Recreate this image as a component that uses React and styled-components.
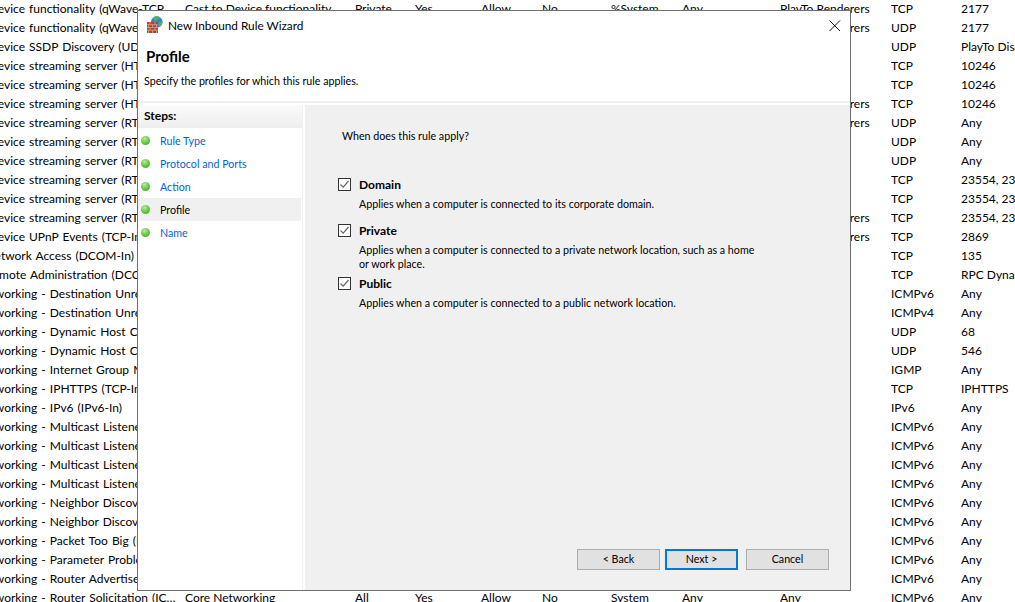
import React from "react";
import styled, { createGlobalStyle } from "styled-components";

const Global = createGlobalStyle`
  html, body { margin: 0; padding: 0; height: 100%; background: #fff; overflow: hidden; }
  #root { height: 602px; overflow: hidden; }
  * { box-sizing: border-box; }
`;

const Desktop = styled.div`
  position: relative;
  width: 1015px;
  height: 602px;
  overflow: hidden;
  background: #fff;
  font-family: "Lato", "Open Sans", sans-serif;
  font-size: 12px;
  color: #000;
`;
const RuleTable = styled.div`
  margin: -1px 0 0 -52px;
  width: 1067px;
`;
const RuleRow = styled.div`
  display: grid;
  grid-template-columns: 237px 170px 60px 66px 61px 69px 71px 98px 111px 70px 70px;
  height: 19px;
  line-height: 19px;
`;
const Cell = styled.div`
  white-space: nowrap;
  overflow: hidden;
  padding-right: ${(p) => (p.$first ? "8px" : "0")};
  text-overflow: ${(p) => (p.$first ? "ellipsis" : "clip")};
  word-spacing: ${(p) => (p.$first ? "1px" : "0")};
  margin-left: ${(p) => (p.$first ? "-2px" : "0")};
`;
const Wizard = styled.section`
  position: absolute;
  left: 137px;
  top: 10px;
  width: 714px;
  height: 581px;
  background: #fff;
  border: 1px solid #6f6f6f;
  display: flex;
  flex-direction: column;
  font-size: 10.7px;
`;
const TitleBar = styled.header`
  height: 30px;
  display: flex;
  align-items: center;
  padding: 0 8px 2px 9px;
  gap: 5px;
  flex: none;
`;
const TitleText = styled.span`
  flex: 1;
  color: #000;
  font-size: 11.8px;
`;
const CloseButton = styled.button`
  width: 14px;
  height: 14px;
  padding: 0;
  border: 0;
  background: none;
  display: flex;
  margin: 2px 0 0;
`;
const Heading = styled.div`
  flex: none;
  height: 62px;
  padding: 5px 0 0 6px;
  border-bottom: 2px solid #f0f0f0;
`;
const HeadingTitle = styled.h1`
  margin: 0 0 0 2px;
  font-size: 15px;
  line-height: 20px;
  font-weight: 700;
`;
const HeadingSub = styled.p`
  margin: 5px 0 0;
  line-height: 20px;
`;
const Body = styled.div`
  flex: 1;
  display: flex;
  min-height: 0;
  padding-top: 2px;
`;
const Steps = styled.nav`
  width: 165px;
  flex: none;
  border-right: 1px solid #f0f0f0;
  margin-right: 2px;
`;
const StepsHeader = styled.div`
  height: 23px;
  line-height: 22px;
  padding-left: 6px;
  font-weight: 700;
  font-size: 12px;
  background: linear-gradient(#fbfbfb, #eeeeee);
`;
const StepList = styled.ul`
  list-style: none;
  margin: 1px 0 0;
  padding: 0 1px 0 0;
`;
const Step = styled.li`
  height: 23px;
  display: flex;
  align-items: center;
  gap: 10px;
  padding-left: 3px;
  color: ${(p) => (p.$current ? "#000" : "#0066cc")};
  background: ${(p) => (p.$current ? "#f0f0f0" : "transparent")};
`;
const Bullet = styled.span`
  width: 9px;
  height: 9px;
  border-radius: 50%;
  flex: none;
  background: radial-gradient(circle at 40% 30%, #b8eba0, #57c236 60%, #45a62c);
`;
const Content = styled.main`
  flex: 1;
  background: #f0f0f0;
  display: flex;
  flex-direction: column;
  padding: 22px 21px 20px 33px;
`;
const Question = styled.p`
  margin: 0 0 0 4px;
  line-height: 18px;
`;
const Options = styled.div`
  margin-top: 31px;
  flex: 1;
  display: flex;
  flex-direction: column;
`;
const Option = styled.div`
  display: grid;
  grid-template-columns: 13px 1fr;
  column-gap: 8px;
  margin-bottom: ${(p) => p.$gap}px;
  align-items: start;
`;
const Box = styled.span`
  width: 13px;
  height: 13px;
  margin-top: 2px;
  background: #fff;
  border: 1px solid #333;
  display: flex;
`;
const OptionLabel = styled.div`
  font-weight: 700;
  font-size: 12px;
  line-height: 17px;
`;
const OptionDesc = styled.p`
  grid-column: 2;
  margin: 4px 0 0;
  width: 398px;
  line-height: 14px;
`;
const ButtonRow = styled.div`
  display: flex;
  justify-content: flex-end;
  gap: 8px;
`;
const Btn = styled.button`
  height: 21px;
  width: ${(p) => p.$w}px;
  margin-right: ${(p) => p.$mr || 0}px;
  font: inherit;
  line-height: 1;
  padding: 0;
  color: #000;
  background: #e1e1e1;
  border: ${(p) => (p.$primary ? "2px solid #0078d7" : "1px solid #adadad")};
`;

const Check = () => (
  <svg width="11" height="11" viewBox="0 0 11 11">
    <path d="M1.5 5.5 L4.2 8.2 L9.5 2" fill="none" stroke="#666" strokeWidth="1.2" />
  </svg>
);

const WallIcon = () => (
  <svg width="16" height="18" viewBox="0 0 16 18">
    <circle cx="9.8" cy="6" r="5.8" fill="#2f86d6" />
    <path d="M6 1.5 C8 -0.2 11 -0.2 13 1.2 C12.5 3 10.5 2.5 9.8 4.2 C9 5.5 6.8 4.8 6 1.5Z" fill="#54b548" />
    <path d="M11.5 6.5 C13 5.5 15.2 5.5 15.5 6.5 C15 9 13.5 11 12 10.5Z" fill="#54b548" />
    <rect x="0" y="6" width="11" height="11" fill="#a5492f" />
    <path d="M0 8.7H11M0 11.5H11M0 14.2H11M3 6V8.7M8 6V8.7M1.5 8.7V11.5M5.5 8.7V11.5M9.5 8.7V11.5M3 11.5V14.2M8 11.5V14.2M1.5 14.2V17M5.5 14.2V17M9.5 14.2V17" stroke="#d9a58f" strokeWidth="0.8" fill="none" />
  </svg>
);

const CloseIcon = () => (
  <svg width="14" height="14" viewBox="0 0 14 14">
    <path d="M1.5 1.5 L12 12 M12 1.5 L1.5 12" stroke="#111" strokeWidth="1" fill="none" />
  </svg>
);

const C = "Cast to Device";
const N = "Core Networking - ";
const cast = [C, "Private", "Yes", "Allow", "No", "System", "Any", "PlayTo Renderers"];
const core = ["Core Networking", "All", "Yes", "Allow", "No", "System", "Any", "Any"];
const rows = [
  [`${C} functionality (qWave-TCP-In)`, "Cast to Device functionality", "Private", "Yes", "Allow", "No", "%System", "Any", "PlayTo Renderers", "TCP", "2177"],
  [`${C} functionality (qWave-UDP-In)`, "Cast to Device functionality", "Private", "Yes", "Allow", "No", "%System", "Any", "PlayTo Renderers", "UDP", "2177"],
  [`${C} SSDP Discovery (UDP-In)`, ...cast.slice(0, 7), "", "UDP", "PlayTo Discovery"],
  [`${C} streaming server (HTTP-Streaming-In)`, ...cast.slice(0, 7), "", "TCP", "10246"],
  [`${C} streaming server (HTTP-Streaming-In)`, ...cast.slice(0, 7), "", "TCP", "10246"],
  [`${C} streaming server (HTTP-Streaming-In)`, ...cast, "TCP", "10246"],
  [`${C} streaming server (RTCP-Streaming-In)`, ...cast, "UDP", "Any"],
  [`${C} streaming server (RTCP-Streaming-In)`, ...cast.slice(0, 7), "", "UDP", "Any"],
  [`${C} streaming server (RTCP-Streaming-In)`, ...cast.slice(0, 7), "", "UDP", "Any"],
  [`${C} streaming server (RTSP-Streaming-In)`, ...cast.slice(0, 7), "", "TCP", "23554, 23555"],
  [`${C} streaming server (RTSP-Streaming-In)`, ...cast.slice(0, 7), "", "TCP", "23554, 23555"],
  [`${C} streaming server (RTSP-Streaming-In)`, ...cast, "TCP", "23554, 23555"],
  [`${C} UPnP Events (TCP-In)`, ...cast, "TCP", "2869"],
  ["COM+ Network Access (DCOM-In)", "COM+ Network Access", "All", "No", "Allow", "No", "System", "Any", "", "TCP", "135"],
  ["COM+ Remote Administration (DCOM-In)", "COM+ Remote Administration", "All", "No", "Allow", "No", "System", "Any", "", "TCP", "RPC Dyna..."],
  [`${N}Destination Unreachable (ICMPv6-In)`, ...core.slice(0, 7), "", "ICMPv6", "Any"],
  [`${N}Destination Unreachable (ICMPv4-In)`, ...core.slice(0, 7), "", "ICMPv4", "Any"],
  [`${N}Dynamic Host Configuration (DHCP-In)`, ...core.slice(0, 7), "", "UDP", "68"],
  [`${N}Dynamic Host Configuration (DHCPV6-In)`, ...core.slice(0, 7), "", "UDP", "546"],
  [`${N}Internet Group Management (IGMP-In)`, ...core.slice(0, 7), "", "IGMP", "Any"],
  [`${N}IPHTTPS (TCP-In)`, ...core.slice(0, 7), "", "TCP", "IPHTTPS"],
  [`${N}IPv6 (IPv6-In)`, ...core.slice(0, 7), "", "IPv6", "Any"],
  [`${N}Multicast Listener Done (ICMPv6-In)`, ...core.slice(0, 7), "", "ICMPv6", "Any"],
  [`${N}Multicast Listener Query (ICMPv6-In)`, ...core.slice(0, 7), "", "ICMPv6", "Any"],
  [`${N}Multicast Listener Report (ICMPv6-In)`, ...core.slice(0, 7), "", "ICMPv6", "Any"],
  [`${N}Multicast Listener Report v2 (ICMPv6-In)`, ...core.slice(0, 7), "", "ICMPv6", "Any"],
  [`${N}Neighbor Discovery Adv (ICMPv6-In)`, ...core.slice(0, 7), "", "ICMPv6", "Any"],
  [`${N}Neighbor Discovery Sol (ICMPv6-In)`, ...core.slice(0, 7), "", "ICMPv6", "Any"],
  [`${N}Packet Too Big (ICMPv6-In)`, ...core.slice(0, 7), "", "ICMPv6", "Any"],
  [`${N}Parameter Problem (ICMPv6-In)`, ...core.slice(0, 7), "", "ICMPv6", "Any"],
  [`${N}Router Advertisement (ICMPv6-In)`, ...core.slice(0, 7), "", "ICMPv6", "Any"],
  [`${N}Router Solicitation (ICMPv6-In)`, ...core, "ICMPv6", "Any"],
];

const steps = ["Rule Type", "Protocol and Ports", "Action", "Profile", "Name"];
const options = [
  { name: "Domain", desc: "Applies when a computer is connected to its corporate domain.", gap: 11 },
  { name: "Private", desc: "Applies when a computer is connected to a private network location, such as a home or work place.", gap: 4 },
  { name: "Public", desc: "Applies when a computer is connected to a public network location.", gap: 0 },
];

export default function App() {
  return (
    <Desktop>
      <Global />
      <RuleTable>
        {rows.map((r, i) => (
          <RuleRow key={i}>
            {r.map((c, j) => (
              <Cell key={j} $first={j === 0}>{c}</Cell>
            ))}
          </RuleRow>
        ))}
      </RuleTable>
      <Wizard>
        <TitleBar>
          <WallIcon />
          <TitleText>New Inbound Rule Wizard</TitleText>
          <CloseButton aria-label="Close"><CloseIcon /></CloseButton>
        </TitleBar>
        <Heading>
          <HeadingTitle>Profile</HeadingTitle>
          <HeadingSub>Specify the profiles for which this rule applies.</HeadingSub>
        </Heading>
        <Body>
          <Steps>
            <StepsHeader>Steps:</StepsHeader>
            <StepList>
              {steps.map((s) => (
                <Step key={s} $current={s === "Profile"}>
                  <Bullet />
                  {s}
                </Step>
              ))}
            </StepList>
          </Steps>
          <Content>
            <Question>When does this rule apply?</Question>
            <Options>
              {options.map((o) => (
                <Option key={o.name} $gap={o.gap}>
                  <Box><Check /></Box>
                  <OptionLabel>{o.name}</OptionLabel>
                  <OptionDesc>{o.desc}</OptionDesc>
                </Option>
              ))}
            </Options>
            <ButtonRow>
              <Btn $w={83} $mr={-3}>&lt; Back</Btn>
              <Btn $w={73} $primary>Next &gt;</Btn>
              <Btn $w={83}>Cancel</Btn>
            </ButtonRow>
          </Content>
        </Body>
      </Wizard>
    </Desktop>
  );
}
